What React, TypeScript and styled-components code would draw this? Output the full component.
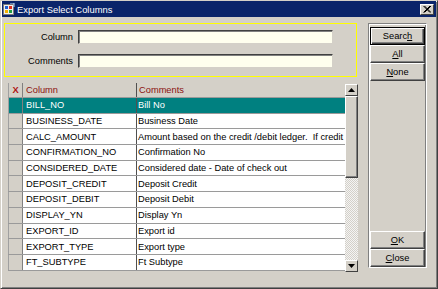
import styled, { createGlobalStyle } from "styled-components";

const GlobalStyle = createGlobalStyle`
  body {
    margin: 0;
    font-family: "Liberation Sans", Arial, sans-serif;
    font-size: 9.3px;
  }
`;

const Window = styled.div`
  width: 438px;
  height: 289px;
  box-sizing: border-box;
  background: #d4d0c8;
  border: 1px solid;
  border-color: #d4d0c8 #404040 #404040 #d4d0c8;
  box-shadow: inset 1px 1px #ffffff, inset -1px -1px #808080;
  display: flex;
  flex-direction: column;
`;

const TitleBar = styled.div`
  height: 16px;
  margin: 0 1px;
  background: #0a246a;
  display: flex;
  align-items: center;
  padding: 0 2px 0 1px;
  gap: 2px;
  color: #ffffff;
`;

const TitleText = styled.span`
  flex: 1;
  font-size: 9.4px;
  padding-top: 1px;
`;

const CloseBox = styled.div`
  width: 14px;
  height: 11px;
  box-sizing: border-box;
  background: #d4d0c8;
  border: 1px solid;
  border-color: #ffffff #404040 #404040 #ffffff;
  display: flex;
  align-items: center;
  justify-content: center;
`;

const Body = styled.div`
  flex: 1;
  display: flex;
  padding: 6px 0 0 3px;
`;

const LeftCol = styled.div`
  width: 354px;
  display: flex;
  flex-direction: column;
`;

const SearchBox = styled.div`
  width: 353px;
  height: 54px;
  box-sizing: border-box;
  border: 1px solid #ffff00;
  display: grid;
  grid-template-columns: 68px 255px;
  column-gap: 5px;
  row-gap: 10px;
  align-content: start;
  align-items: center;
  padding: 6px 0 0 0;
`;

const Label = styled.label`
  text-align: right;
  color: #000000;
`;

const Field = styled.div`
  height: 14px;
  box-sizing: border-box;
  background: #ffffee;
  border: 1px solid;
  border-color: #404040 #d4d0c8 #d4d0c8 #404040;
  box-shadow: inset 1px 1px #808080;
`;

const Grid = styled.div`
  margin: 6px 0 0 4px;
  width: 350px;
  height: 189px;
  display: flex;
`;

const Table = styled.div`
  width: 337px;
  display: flex;
  flex-direction: column;
  background: #d4d0c8;
`;

const Row = styled.div<{ $header?: boolean; $selected?: boolean }>`
  display: grid;
  grid-template-columns: 15px 114px 208px;
  height: ${(p) => (p.$header ? "15px" : "15.7px")};
  box-sizing: border-box;
  border-bottom: 1px solid #9a9a9a;
  background: ${(p) => (p.$selected ? "#008080" : p.$header ? "#d4d0c8" : "#ffffff")};
  color: ${(p) => (p.$selected ? "#ffffff" : p.$header ? "#8b1010" : "#000000")};
`;

const Selector = styled.div<{ $selected?: boolean }>`
  background: ${(p) => (p.$selected ? "#008080" : "#d4d0c8")};
  border-left: 1px solid #a0a0a0;
  border-right: 1px solid #808080;
  display: flex;
  align-items: center;
  justify-content: center;
  font-weight: bold;
  color: #b01010;
`;

const Cell = styled.div<{ $pad: number; $last?: boolean }>`
  display: flex;
  align-items: center;
  padding-left: ${(p) => p.$pad}px;
  border-right: ${(p) => (p.$last ? "none" : "1px solid #505050")};
  white-space: pre;
  overflow: hidden;
`;

const ScrollBar = styled.div`
  width: 13px;
  display: flex;
  flex-direction: column;
  padding-top: 1px;
`;

const ArrowBtn = styled.div`
  width: 13px;
  height: 12px;
  box-sizing: border-box;
  background: #d4d0c8;
  border: 1px solid;
  border-color: #ffffff #404040 #404040 #ffffff;
  display: flex;
  align-items: center;
  justify-content: center;
`;

const Thumb = styled.div`
  height: 82px;
  box-sizing: border-box;
  background: #d4d0c8;
  border: 1px solid;
  border-color: #ffffff #404040 #404040 #ffffff;
  box-shadow: inset -1px -1px #808080;
`;

const Track = styled.div`
  flex: 1;
  background: repeating-conic-gradient(#d4d0c8 0 25%, #f4f4f4 0 50%) 0 0 / 2px 2px;
`;

const ButtonPanel = styled.div`
  margin-left: 10px;
  width: 59px;
  height: 245px;
  box-sizing: border-box;
  border: 1px solid;
  border-color: #808080 #ffffff #ffffff #808080;
  box-shadow: inset 1px 1px #ffffff, inset -1px -1px #808080;
  padding: 3px 1px 0 1px;
  display: flex;
  flex-direction: column;
`;

const Spacer = styled.div`
  flex: 1;
`;

const Button = styled.div<{ $default?: boolean }>`
  height: 18px;
  box-sizing: border-box;
  background: #d4d0c8;
  border: 1px solid;
  border-color: ${(p) => (p.$default ? "#000000" : "#ffffff #404040 #404040 #ffffff")};
  box-shadow: ${(p) =>
    p.$default
      ? "inset 1px 1px #ffffff, inset -1px -1px #404040, inset -2px -2px #808080"
      : "inset -1px -1px #808080"};
  display: flex;
  align-items: center;
  justify-content: center;
  color: #000000;
`;

const rows = [
  ["BILL_NO", "Bill No"],
  ["BUSINESS_DATE", "Business Date"],
  ["CALC_AMOUNT", "Amount based on the credit /debit ledger.  If credit value is null"],
  ["CONFIRMATION_NO", "Confirmation No"],
  ["CONSIDERED_DATE", "Considered date - Date of check out"],
  ["DEPOSIT_CREDIT", "Deposit Credit"],
  ["DEPOSIT_DEBIT", "Deposit Debit"],
  ["DISPLAY_YN", "Display Yn"],
  ["EXPORT_ID", "Export id"],
  ["EXPORT_TYPE", "Export type"],
  ["FT_SUBTYPE", "Ft Subtype"],
];

function AppIcon() {
  return (
    <svg width="12" height="13" viewBox="0 0 12 13">
      <rect x="0.5" y="1.5" width="10" height="10" fill="#f0f0f0" stroke="#7a7a7a" />
      <rect x="2" y="3" width="3" height="3" fill="#2060d0" />
      <rect x="6" y="3" width="3" height="3" fill="#e03020" />
      <rect x="2" y="7" width="3" height="3" fill="#f0b000" />
      <rect x="6" y="7" width="3" height="3" fill="#20a040" />
      <path d="M7 0 L11 0 L11 4" fill="none" stroke="#c0e0ff" />
    </svg>
  );
}

function App() {
  return (
    <>
      <GlobalStyle />
      <Window>
        <TitleBar>
          <AppIcon />
          <TitleText>Export Select Columns</TitleText>
          <CloseBox>
            <svg width="8" height="7" viewBox="0 0 8 7">
              <path d="M0.5 0 L7 6.5 M1.5 0 L8 6.5 M7 0 L0.5 6.5 M8 0 L1.5 6.5" stroke="#000" strokeWidth="1" />
            </svg>
          </CloseBox>
        </TitleBar>
        <Body>
          <LeftCol>
            <SearchBox>
              <Label>Column</Label>
              <Field />
              <Label>Comments</Label>
              <Field />
            </SearchBox>
            <Grid>
              <Table>
                <Row $header>
                  <Selector>X</Selector>
                  <Cell $pad={3}>Column</Cell>
                  <Cell $pad={2} $last>Comments</Cell>
                </Row>
                {rows.map(([col, comment], i) => (
                  <Row key={col} $selected={i === 0}>
                    <Selector $selected={i === 0} />
                    <Cell $pad={3}>{col}</Cell>
                    <Cell $pad={1} $last>{comment}</Cell>
                  </Row>
                ))}
              </Table>
              <ScrollBar>
                <ArrowBtn>
                  <svg width="7" height="4" viewBox="0 0 7 4">
                    <path d="M3.5 0 L7 4 L0 4 Z" fill="#000" />
                  </svg>
                </ArrowBtn>
                <Thumb />
                <Track />
                <ArrowBtn>
                  <svg width="7" height="4" viewBox="0 0 7 4">
                    <path d="M0 0 L7 0 L3.5 4 Z" fill="#000" />
                  </svg>
                </ArrowBtn>
              </ScrollBar>
            </Grid>
          </LeftCol>
          <ButtonPanel>
            <Button $default>Searc<u>h</u></Button>
            <Button><u>A</u>ll</Button>
            <Button><u>N</u>one</Button>
            <Spacer />
            <Button><u>O</u>K</Button>
            <Button><u>C</u>lose</Button>
          </ButtonPanel>
        </Body>
      </Window>
    </>
  );
}

export default App;
